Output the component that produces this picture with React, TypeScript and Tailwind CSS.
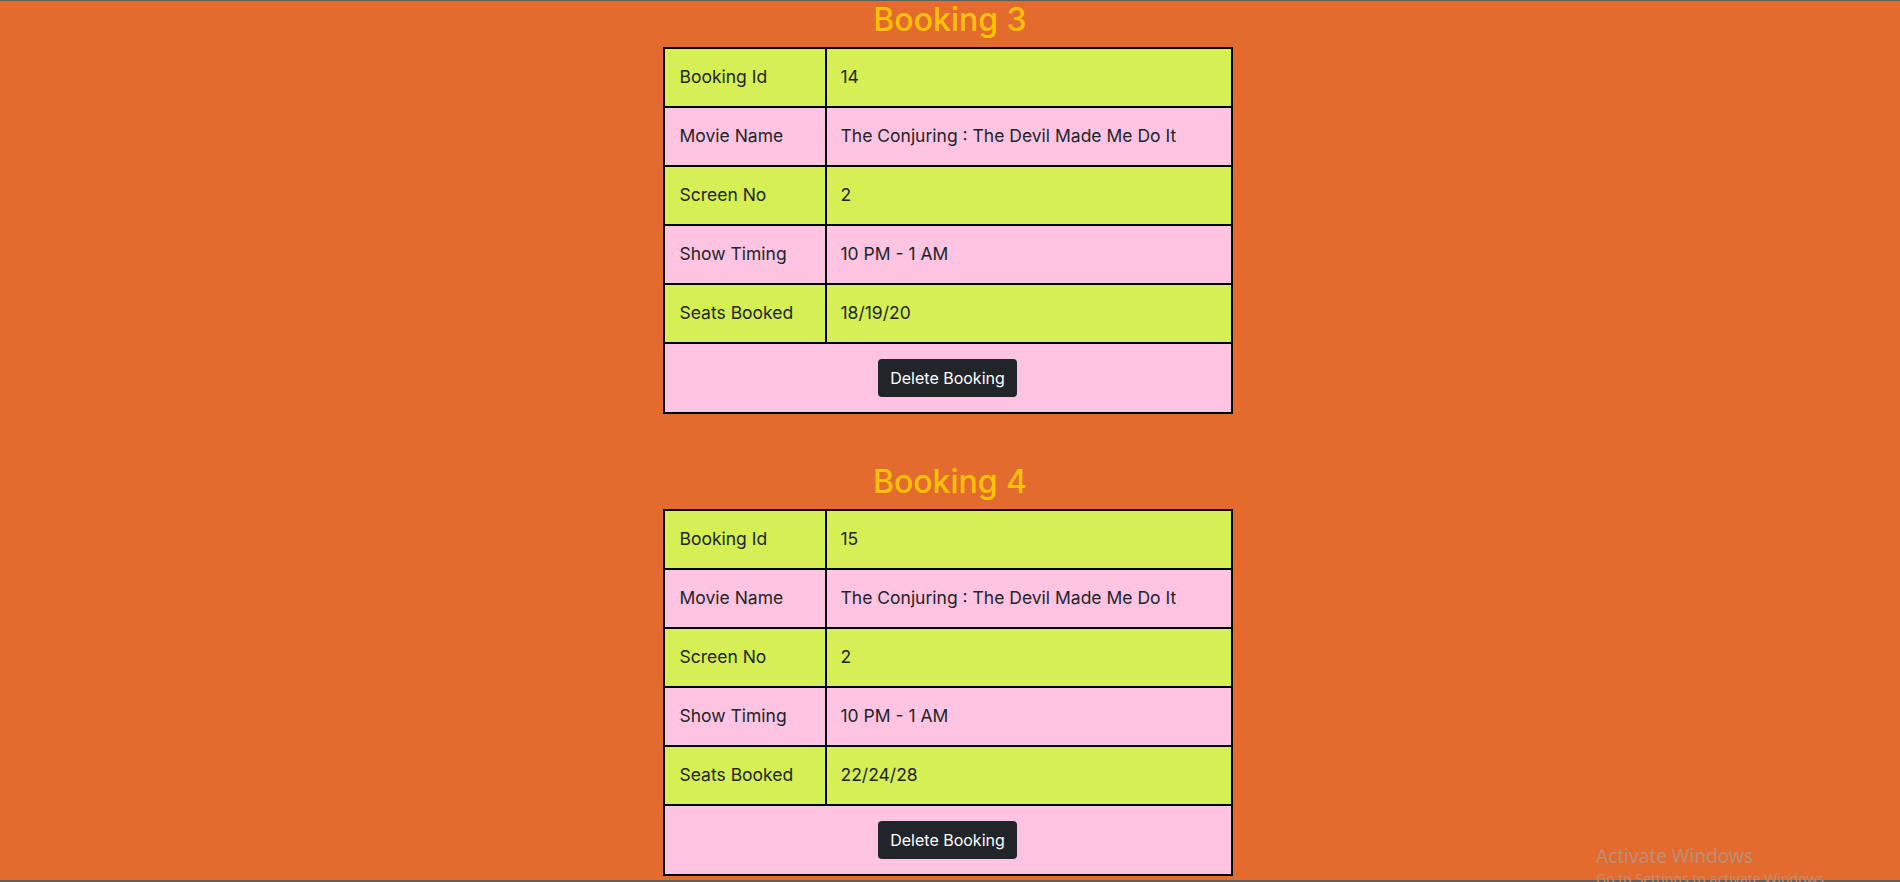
import React from "react";

type Booking = {
  title: string;
  id: string;
  movie: string;
  screen: string;
  timing: string;
  seats: string;
};

const bookings: Booking[] = [
  { title: "Booking 3", id: "14", movie: "The Conjuring : The Devil Made Me Do It", screen: "2", timing: "10 PM - 1 AM", seats: "18/19/20" },
  { title: "Booking 4", id: "15", movie: "The Conjuring : The Devil Made Me Do It", screen: "2", timing: "10 PM - 1 AM", seats: "22/24/28" },
];

const GREEN = "bg-[#d6ef55]";
const PINK = "bg-[#ffc4e2]";

function Row({ label, value, green }: { label: string; value: string; green: boolean }) {
  return (
    <div className={`flex h-[59px] border-b-2 border-black ${green ? GREEN : PINK}`}>
      <div className="w-[162px] shrink-0 border-r-2 border-black flex items-center pl-[15px]">{label}</div>
      <div className="flex-1 flex items-center pl-[14px]">{value}</div>
    </div>
  );
}

function BookingCard({ b }: { b: Booking }) {
  return (
    <div className="mb-[49px]">
      <h2 className="text-center text-[32px] leading-[38px] mb-[8px] font-medium text-[#ffc107]">{b.title}</h2>
      <div className="flex justify-center pr-[5px]">
        <div className="w-[570px] border-2 border-b-0 border-black text-[17.5px] text-[#212529]">
          <Row label="Booking Id" value={b.id} green />
          <Row label="Movie Name" value={b.movie} green={false} />
          <Row label="Screen No" value={b.screen} green />
          <Row label="Show Timing" value={b.timing} green={false} />
          <Row label="Seats Booked" value={b.seats} green />
          <div className={`h-[70px] border-b-2 border-black flex items-center justify-center ${PINK}`}>
            <button className="bg-[#212529] text-white text-[16px] leading-[24px] px-[12px] py-[7px] rounded-[4px]">
              Delete Booking
            </button>
          </div>
        </div>
      </div>
    </div>
  );
}

export default function App() {
  return (
    <div
      className="relative h-[882px] w-[1900px] overflow-hidden bg-[#e36b2e] flex flex-col"
      style={{ fontFamily: "Inter, 'Noto Sans', sans-serif" }}
    >
      <div className="h-[1px] bg-[#5f5f5f] shrink-0" />
      <div className="flex-1 overflow-hidden">
        {bookings.map((b) => (
          <BookingCard key={b.title} b={b} />
        ))}
      </div>
      <div className="h-[2px] bg-[#5f5f5f] shrink-0" />
      <div
        className="absolute left-[1596px] top-[847px] text-[#bd8d78] leading-none"
        style={{ fontFamily: "'Noto Sans', sans-serif" }}
      >
        <div className="text-[19px]">Activate Windows</div>
        <div className="text-[14px] mt-[6px]">Go to Settings to activate Windows.</div>
      </div>
    </div>
  );
}
